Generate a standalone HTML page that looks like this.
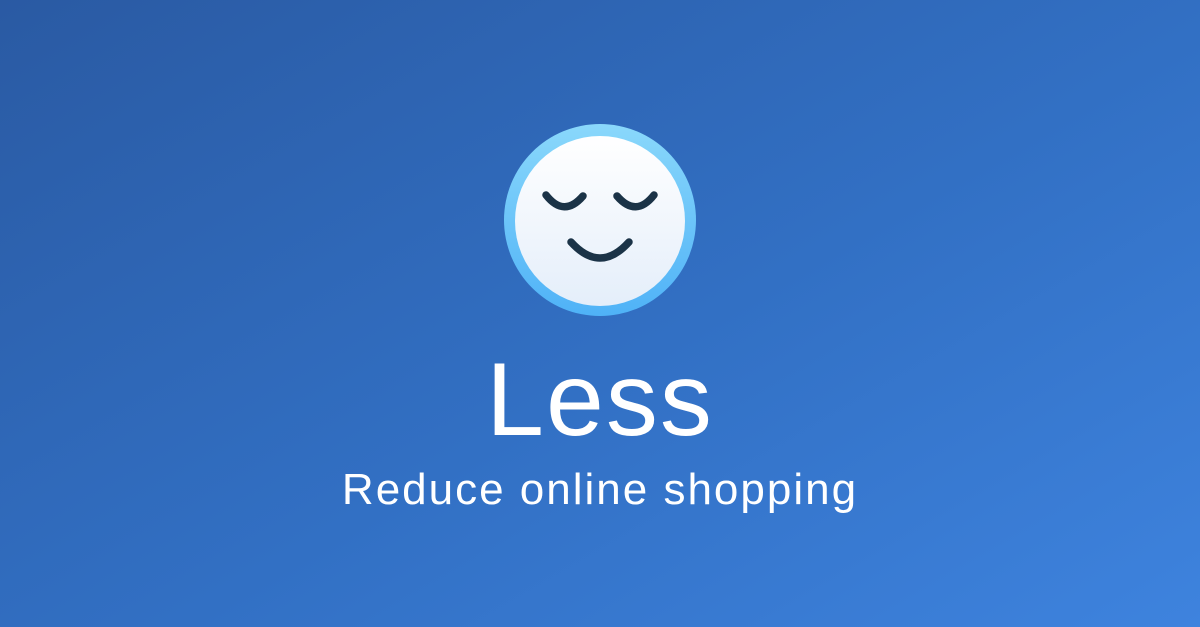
<!DOCTYPE html>
<html><head><style>
html,body{margin:0;padding:0}
body{width:1200px;height:627px;overflow:hidden;position:relative;background:linear-gradient(150deg,#2a5aa3 0%,#3270c4 55%,#3e83de 100%);font-family:"Liberation Sans",sans-serif;color:#fff}
.t{position:absolute;left:0;width:1200px;text-align:center;white-space:nowrap}
</style></head><body>
<svg style="position:absolute;left:0;top:0" width="1200" height="627">
<defs>
<linearGradient id="r" x1="0" y1="0" x2="0" y2="1"><stop offset="0" stop-color="#8ad8fb"/><stop offset="1" stop-color="#4fb2f7"/></linearGradient>
<linearGradient id="f" x1="0" y1="0" x2="0" y2="1"><stop offset="0" stop-color="#ffffff"/><stop offset="1" stop-color="#e4eefa"/></linearGradient>
</defs>
<circle cx="600" cy="220" r="96" fill="url(#r)"/>
<circle cx="600" cy="221" r="85" fill="url(#f)"/>
<g fill="none" stroke="#1b3347" stroke-width="7.5" stroke-linecap="round">
<path d="M546 195 Q564 218 583 196"/>
<path d="M617 196 Q636 218 654 195"/>
<path d="M571 242 Q600 274 629 242"/>
</g>
</svg>
<div class="t" style="top:340px;font-size:104px;line-height:120px;letter-spacing:2px">Less</div>
<div class="t" style="top:463px;font-size:44px;line-height:54px;letter-spacing:2px">Reduce online shopping</div>
</body></html>
